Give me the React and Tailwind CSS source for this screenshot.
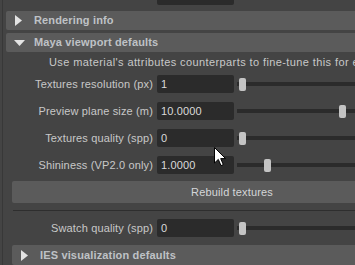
import React from 'react'

const Triangle = ({ open }) =>
  open ? (
    <svg width="11" height="6" viewBox="0 0 11 6" className="shrink-0">
      <path d="M0 0 L11 0 L5.5 6 Z" fill="#e4e4e4" />
    </svg>
  ) : (
    <svg width="7" height="11" viewBox="0 0 7 11" className="shrink-0">
      <path d="M0 0 L7 5.5 L0 11 Z" fill="#e4e4e4" />
    </svg>
  )

const Header = ({ title, open, className = '' }) => (
  <div className={`flex items-center rounded-[2px] bg-[#5b5b5b] ${className}`}>
    <div className={open ? 'w-[28px] pl-[8px]' : 'w-[28px] pl-[9px]'}>
      <Triangle open={open} />
    </div>
    <span className="font-bold text-[#bfc2c6] whitespace-nowrap">{title}</span>
  </div>
)

const Field = ({ label, value, thumb, labelWidth = 'w-[141px]', slider = true }) => (
  <div className="flex h-[18px] items-center">
    <div className={`${labelWidth} shrink-0 text-right whitespace-nowrap`}>{label}</div>
    <div className="ml-[4px] flex h-[18px] w-[77px] shrink-0 items-center rounded-[2px] bg-[#2b2b2b] pl-[4px] text-[#dadada]">
      {value}
    </div>
    {slider && (
      <div className="relative ml-[3px] h-[4px] flex-1 bg-[#2b2b2b]">
        <div
          className="absolute top-[-4px] h-[13px] w-[7px] rounded-[2px] bg-[#c4c4c4]"
          style={{ left: thumb }}
        />
      </div>
    )}
  </div>
)

export default function App() {
  return (
    <div className="relative h-[265px] w-[355px] overflow-hidden bg-[#444444] font-['Liberation_Sans',Arial,sans-serif] text-[11px] tracking-[0.15px] text-[#c8c8c8]">
      <div className="flex h-full w-[452px]">
        <div className="w-[6px] shrink-0 pl-[2px]">
          <div className="h-full w-px bg-[#383838]" />
        </div>
        <div className="flex flex-1 flex-col">
          <div className="-mt-[13px]">
            <Field label="Path" value="" labelWidth="w-[147px]" slider={false} />
          </div>
          <Header title="Rendering info" className="mt-[6px] h-[19px]" />
          <Header title="Maya viewport defaults" open className="mt-[3px] h-[19px]" />
          <div className="flex flex-col pl-[6px]">
            <div className="mt-[4px] h-[13px] pl-[37px] leading-[13px] tracking-[0.4px] whitespace-nowrap">
              Use material's attributes counterparts to fine-tune this for each material.
            </div>
            <div className="mt-[6px] flex flex-col gap-[9px]">
              <Field label="Textures resolution (px)" value="1" thumb={2} />
              <Field label="Preview plane size (m)" value="10.0000" thumb={102} />
              <Field label="Textures quality (spp)" value="0" thumb={2} />
              <Field label="Shininess (VP2.0 only)" value="1.0000" thumb={27} />
            </div>
            <div className="mt-[7px] flex h-[22px] items-center justify-center rounded-[2px] bg-[#5b5b5b] text-[#d4d6d8]">
              Rebuild textures
            </div>
            <div className="ml-px mt-[7px] h-px bg-[#2e2e2e]" />
            <div className="mt-[8px]">
              <Field label="Swatch quality (spp)" value="0" thumb={2} />
            </div>
            <Header title="IES visualization defaults" className="mt-[8px] h-[20px]" />
          </div>
        </div>
      </div>
      <svg
        className="absolute left-[214px] top-[147px]"
        width="13"
        height="20"
        viewBox="0 0 13 20"
      >
        <path
          d="M0.5 0.5 L0.5 16 L4.3 12.4 L7 18.6 L9.3 17.6 L6.7 11.6 L11.6 11.6 Z"
          fill="#ffffff"
          stroke="#000000"
          strokeWidth="1"
          strokeLinejoin="miter"
        />
      </svg>
    </div>
  )
}
